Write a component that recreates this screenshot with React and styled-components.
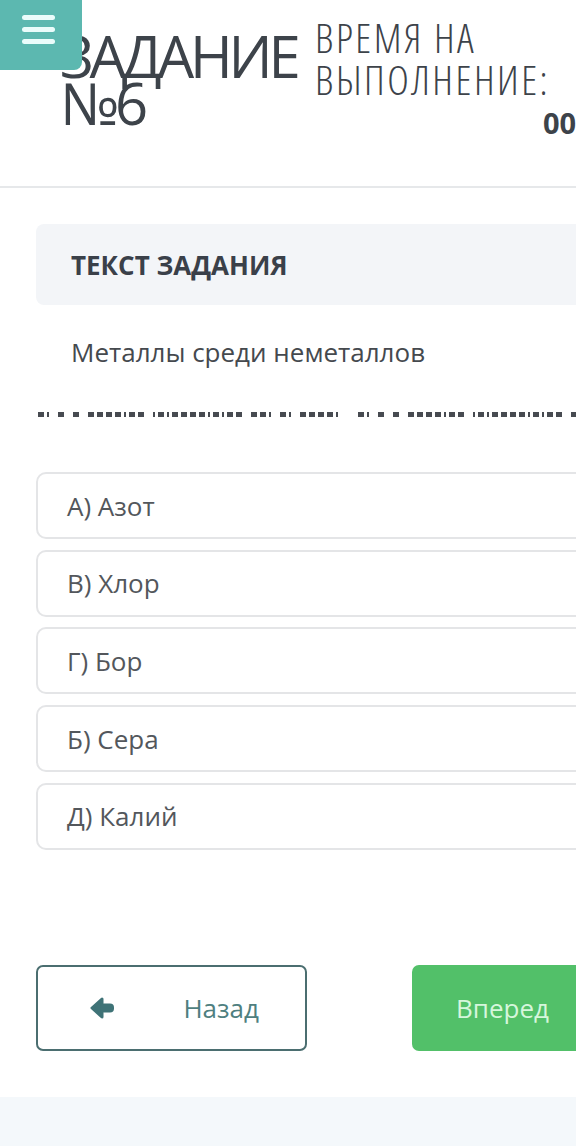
import React from 'react';
import styled, {createGlobalStyle} from 'styled-components';

const GlobalStyle = createGlobalStyle`
    html, body {
        margin: 0;
        padding: 0;
        background: #f4f8fb;
        font-family: "Open Sans", "Liberation Sans", sans-serif;
        overflow: hidden;
    }
`;

const Card = styled.div`
    position: relative;
    background: #fff;
    width: 576px;
    overflow: hidden;
    padding-bottom: 46px;
    box-shadow: 0 4px 14px rgba(30, 50, 80, 0.09);
`;

const MenuButton = styled.div`
    position: absolute;
    top: 0;
    left: 0;
    width: 82px;
    height: 70px;
    background: #5cb8b0;
    border-bottom-right-radius: 8px;
    display: flex;
    flex-direction: column;
    justify-content: center;
    align-items: center;
    gap: 7px;
    padding-bottom: 12px;
    padding-right: 6px;
    box-sizing: border-box;
    z-index: 2;
`;

const MenuBar = styled.span`
    display: block;
    width: 33px;
    height: 5px;
    border-radius: 3px;
    background: #eafcfb;
`;

const Header = styled.header`
    display: flex;
    align-items: flex-start;
    height: 186px;
    padding-left: 60px;
    border-bottom: 2px solid #e6e8ea;
    color: #3d434a;
    white-space: nowrap;
`;

const Title = styled.h1`
    flex: 0 0 237px;
    margin: 32px 0 0;
    font-size: 58px;
    line-height: 47px;
    font-weight: 400;
    letter-spacing: -4.2px;
    font-stretch: 88%;
`;

const Timer = styled.div`
    margin: 16px 0 0 18px;
    font-size: 41px;
    line-height: 42px;
    font-weight: 300;
    letter-spacing: 2.5px;
    font-stretch: 75%;
`;

const TimeValue = styled.div`
    margin: 4px 0 0 228px;
    font-size: 29px;
    line-height: 37px;
    font-weight: 700;
    letter-spacing: 0;
    font-stretch: 100%;
`;

const Body = styled.section`
    width: 700px;
    padding-left: 36px;
`;

const TaskHead = styled.div`
    margin-top: 36px;
    height: 81px;
    display: flex;
    align-items: center;
    padding-left: 35px;
    background: #f3f5f8;
    border-radius: 8px;
    font-size: 26px;
    font-weight: 700;
    color: #3a4049;
`;

const Question = styled.p`
    margin: 30px 0 0;
    padding-left: 35px;
    font-size: 26px;
    line-height: 35px;
    color: #45494e;
`;

const Redacted = styled.div`
    margin: 42px 0 0 2px;
    display: flex;
    height: 6px;
`;

const Dash = styled.span`
    display: block;
    height: 5px;
    flex-shrink: 0;
    background: #474b51;
`;

const Options = styled.div`
    margin-top: 54px;
    display: flex;
    flex-direction: column;
    gap: 10.7px;
`;

const Option = styled.div`
    height: 67px;
    box-sizing: border-box;
    display: flex;
    align-items: center;
    padding-left: 29px;
    border: 2px solid #e4e5e7;
    border-radius: 10px;
    font-size: 26px;
    color: #53575c;
`;

const Nav = styled.div`
    margin-top: 115px;
    display: flex;
    gap: 105px;
`;

const BackButton = styled.button`
    width: 271px;
    height: 86px;
    box-sizing: border-box;
    display: flex;
    align-items: center;
    justify-content: space-between;
    padding: 0 46px 0 52px;
    background: #fff;
    border: 2px solid #4b6e70;
    border-radius: 7px;
    font-family: inherit;
    font-size: 26px;
    color: #4f7f80;
`;

const NextButton = styled.button`
    width: 271px;
    height: 86px;
    display: flex;
    align-items: center;
    padding: 0 44px;
    background: #52c069;
    border: none;
    border-radius: 7px;
    font-family: inherit;
    font-size: 26px;
    color: #d6f6dc;
`;

const ArrowLeft = () => (
    <svg width="25" height="22" viewBox="0 0 25 22">
        <path d="M2 11 L12 2 L12 20 Z" fill="#3f7377" stroke="#3f7377"
              strokeWidth="3" strokeLinejoin="round"/>
        <rect x="10" y="6.5" width="14" height="9" rx="4" fill="#3f7377"/>
    </svg>
);

const answers = ['А) Азот', 'В) Хлор', 'Г) Бор', 'Б) Сера', 'Д) Калий'];

// hidden text shows as dashes: # = wide block, i = narrow block, space = word gap
const hiddenRun = '#i # # ####i## i#i####i#i## ##i #i ####i';

function toDashes(run) {
    const out = [];
    for (const ch of run) {
        if (ch === ' ') {
            out[out.length - 1].gap = 9;
        } else {
            out.push({w: ch === '#' ? 6 : 2, gap: 3});
        }
    }
    out[out.length - 1].gap = 20;
    return out;
}

export default function App() {
    const dashes = [...toDashes(hiddenRun), ...toDashes(hiddenRun)];
    return (
        <>
            <GlobalStyle/>
            <Card>
                <MenuButton>
                    <MenuBar/>
                    <MenuBar/>
                    <MenuBar/>
                </MenuButton>
                <Header>
                    <Title>ЗАДАНИЕ<br/>№6</Title>
                    <Timer>
                        ВРЕМЯ НА<br/>ВЫПОЛНЕНИЕ:
                        <TimeValue>00:04:51</TimeValue>
                    </Timer>
                </Header>
                <Body>
                    <TaskHead>ТЕКСТ ЗАДАНИЯ</TaskHead>
                    <Question>Металлы среди неметаллов</Question>
                    <Redacted>
                        {dashes.map((d, i) => (
                            <Dash key={i} style={{width: d.w, marginRight: d.gap}}/>
                        ))}
                    </Redacted>
                    <Options>
                        {answers.map(a => <Option key={a}>{a}</Option>)}
                    </Options>
                    <Nav>
                        <BackButton><ArrowLeft/>Назад</BackButton>
                        <NextButton>Вперед</NextButton>
                    </Nav>
                </Body>
            </Card>
        </>
    );
}
